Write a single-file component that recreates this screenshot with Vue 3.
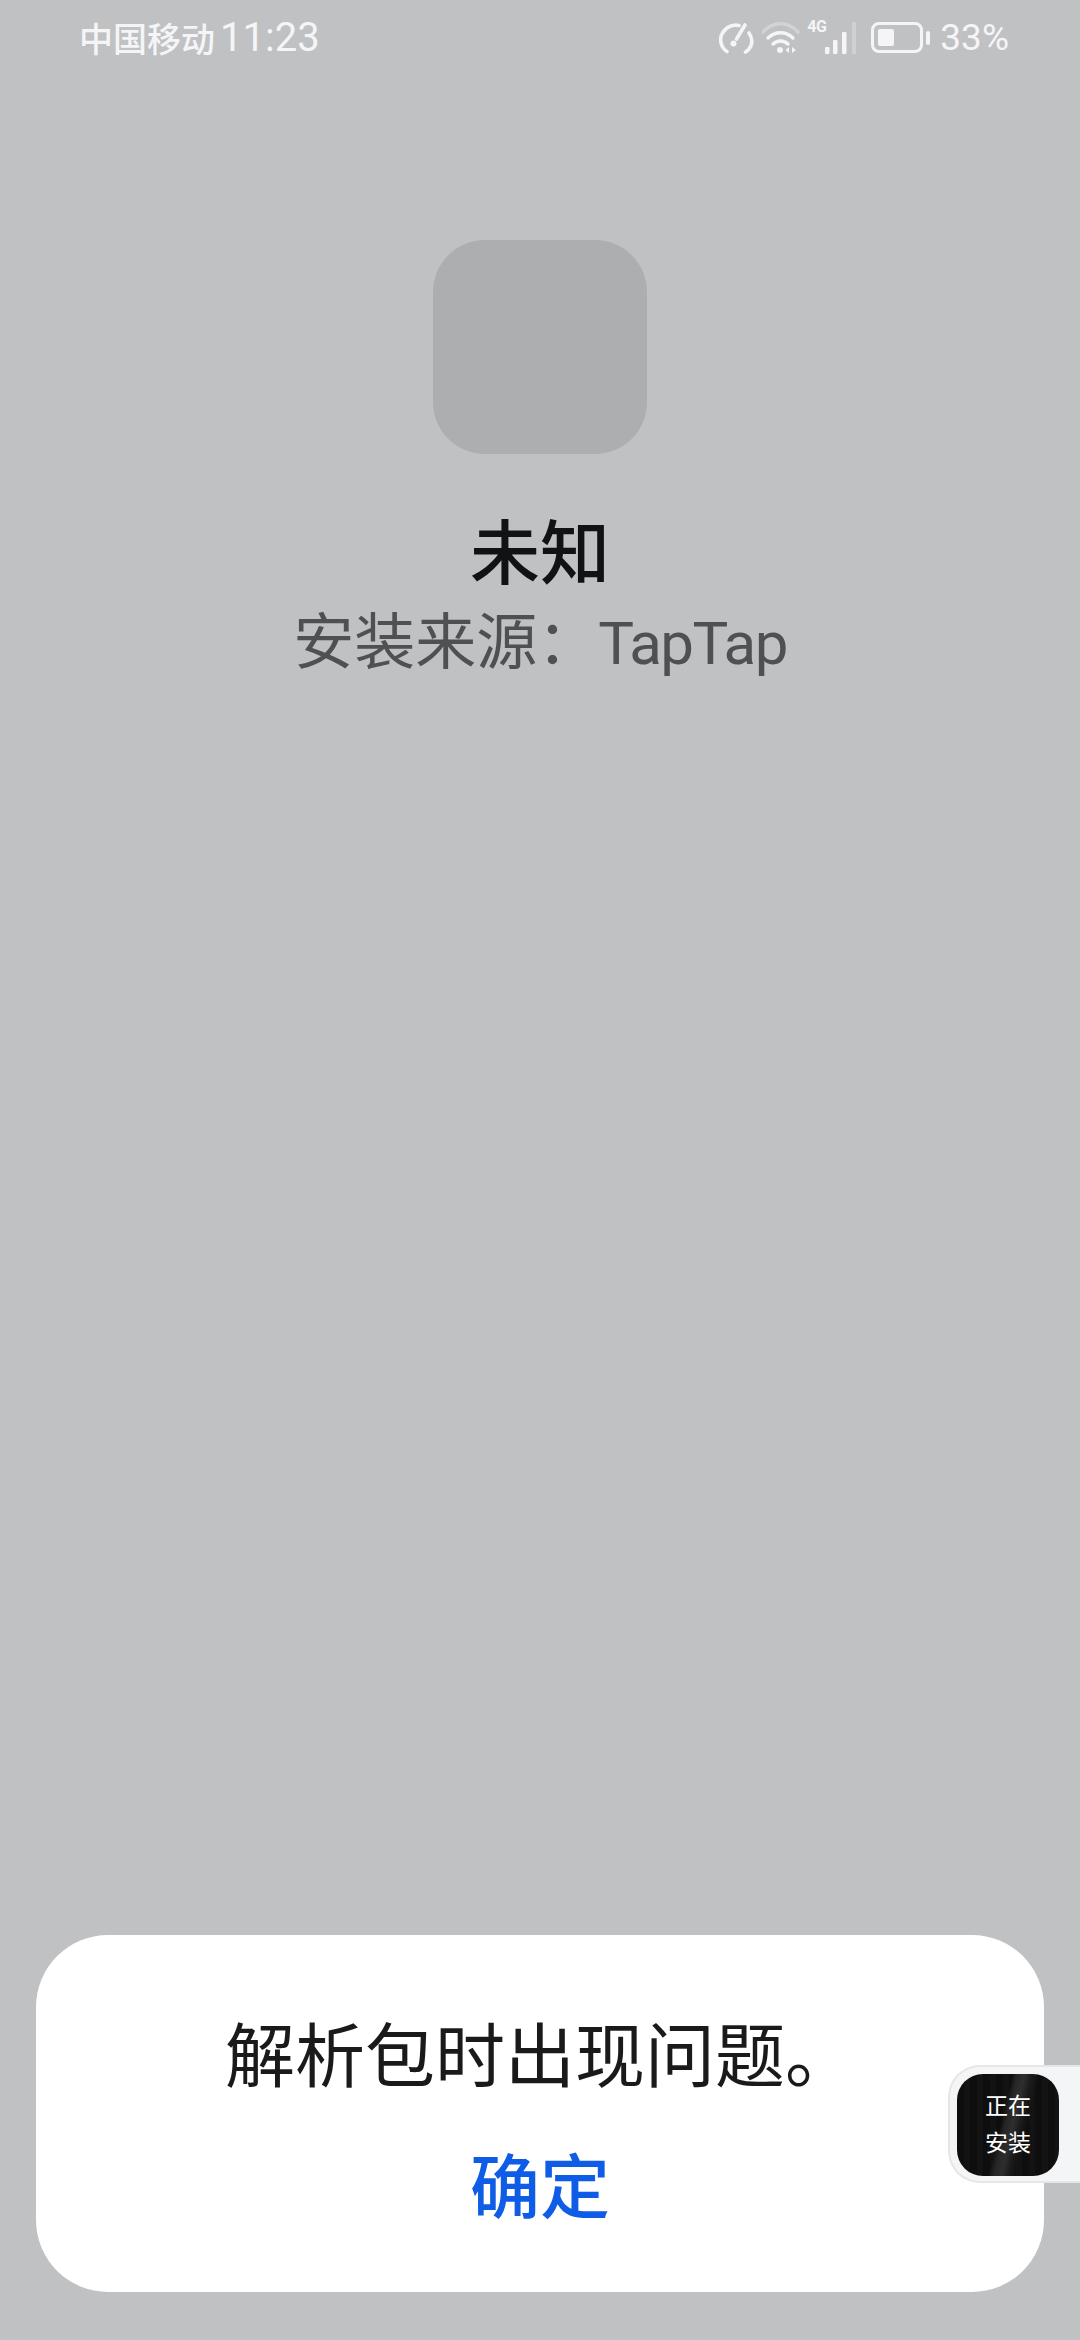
<template>
  <div class="page">
    <div class="status-bar">
      <div class="status-left">
        <span class="carrier">中国移动</span>
        <span class="clock">11:23</span>
      </div>
      <div class="status-right">
        <svg class="ic-speed" width="36" height="32" viewBox="0 0 36 32" fill="none" stroke="#f5f5f7" stroke-width="3.6" stroke-linecap="round">
          <path d="M9 29.5 C3 26 0.8 17 4.5 11 C8 5 15 2 21 3.5" />
          <path d="M31 11 C36 18 34 26 27.5 30" />
          <path d="M27 3 L18.5 17" />
          <circle cx="15.5" cy="21.5" r="3" fill="#f5f5f7" stroke="none" />
        </svg>
        <svg class="ic-wifi" width="38" height="32" viewBox="0 0 38 32" fill="none" stroke-linecap="round">
          <path d="M1 10 C11 -1 26 -1 36 10" stroke="#d2d3d5" stroke-width="3.4" />
          <path d="M6 16 C13 9 24 9 31 16" stroke="#f5f5f7" stroke-width="3.4" />
          <path d="M11 22 C15 18 22 18 26 22" stroke="#f5f5f7" stroke-width="3.4" />
          <circle cx="18" cy="28" r="3" fill="#f5f5f7" />
          <path d="M27 25 L27 31 L23.5 28 Z M30 25 L30 31 L34 28 Z" fill="#f5f5f7" />
        </svg>
        <div class="signal">
          <span class="net">4G</span>
          <svg width="33" height="32" viewBox="0 0 33 32" fill="#f5f5f7">
            <rect x="0" y="25" width="4.5" height="7" rx="1" />
            <rect x="8" y="18" width="4.5" height="14" rx="1" />
            <rect x="17" y="10" width="4.5" height="22" rx="1" />
            <rect x="27" y="0" width="4" height="32" rx="1" fill="#cfd0d2" />
          </svg>
        </div>
        <div class="battery">
          <div class="battery-body"><div class="battery-level"></div></div>
          <div class="battery-tip"></div>
        </div>
        <span class="percent">33%</span>
      </div>
    </div>

    <div class="app-info">
      <div class="app-icon"></div>
      <div class="app-name">未知</div>
      <div class="app-source">安装来源：<span class="source-name">TapTap</span></div>
    </div>

    <div class="dialog">
      <div class="message">解析包时出现问题。</div>
      <div class="confirm">确定</div>
    </div>

    <div class="install-pill">
      <div class="install-thumb">
        <span>正在</span>
        <span>安装</span>
      </div>
    </div>
  </div>
</template>

<script setup>
</script>

<style>
html,
body {
  margin: 0;
  background: #c0c1c3;
}
</style>

<style scoped>
.page {
  position: relative;
  width: 1080px;
  height: 2340px;
  display: flex;
  flex-direction: column;
  background: #c0c1c3;
  overflow: hidden;
  font-family: "Roboto", "Noto Sans CJK SC", sans-serif;
}

.status-bar {
  display: flex;
  justify-content: space-between;
  align-items: center;
  height: 75px;
  padding: 0 71px 0 79px;
  color: #f5f5f7;
  font-weight: 500;
}

.status-left {
  display: flex;
  align-items: center;
  gap: 5px;
}

.carrier {
  font-size: 34px;
}

.clock {
  font-size: 40px;
  font-weight: 400;
}

.status-right {
  display: flex;
  align-items: center;
}

.ic-wifi {
  margin-left: 8px;
}

.signal {
  position: relative;
  margin-left: 25px;
  display: flex;
}

.net {
  position: absolute;
  left: -18px;
  top: -3px;
  font-size: 16px;
  font-weight: 700;
  line-height: 16px;
  letter-spacing: -0.5px;
}

.battery {
  display: flex;
  align-items: center;
  gap: 3px;
  margin-left: 13px;
}

.battery-body {
  width: 52px;
  height: 31px;
  box-sizing: border-box;
  border: 3px solid #f5f5f7;
  border-radius: 8px;
  padding: 4px;
}

.battery-level {
  width: 16px;
  height: 100%;
  background: #f5f5f7;
  border-radius: 2px;
}

.battery-tip {
  width: 4px;
  height: 14px;
  background: #f5f5f7;
  border-radius: 2px;
}

.percent {
  margin-left: 10px;
  font-size: 37px;
  font-weight: 400;
}

.app-info {
  display: flex;
  flex-direction: column;
  align-items: center;
  padding-top: 165px;
}

.app-icon {
  width: 214px;
  height: 214px;
  border-radius: 52px;
  background: #adaeb0;
}

.app-name {
  margin-top: 57px;
  font-size: 70px;
  line-height: 88px;
  font-weight: 500;
  color: #111214;
}

.app-source {
  font-size: 61px;
  line-height: 88px;
  color: #4f5052;
}

.source-name {
  font-size: 60px;
  letter-spacing: -1.5px;
}

.dialog {
  margin: auto 36px 48px;
  height: 357px;
  box-sizing: border-box;
  padding-top: 77px;
  display: flex;
  flex-direction: column;
  align-items: center;
  background: #fff;
  border-radius: 72px;
}

.message {
  font-size: 70px;
  line-height: 92px;
  color: #1a1a1a;
}

.confirm {
  margin-top: 39px;
  font-size: 70px;
  line-height: 92px;
  font-weight: 500;
  color: #0f5ce6;
}

.install-pill {
  position: absolute;
  right: 0;
  top: 2065px;
  width: 132px;
  height: 118px;
  box-sizing: border-box;
  padding: 7px 0 0 7px;
  background: #f4f5f7;
  border: 2px solid #e6e6e6;
  border-right: 0;
  border-radius: 32px 0 0 32px;
}

.install-thumb {
  width: 102px;
  height: 102px;
  display: flex;
  flex-direction: column;
  align-items: center;
  justify-content: center;
  gap: 11px;
  border-radius: 26px;
  background:
    linear-gradient(103deg, transparent 44%, #262626 48%, #2e2e2e 54%, #1a1a1a 60%, transparent 66%),
    repeating-linear-gradient(90deg, #0e0e0e 0 7px, #131313 7px 13px);
  color: #fff;
  font-size: 23px;
  line-height: 26px;
}
</style>
